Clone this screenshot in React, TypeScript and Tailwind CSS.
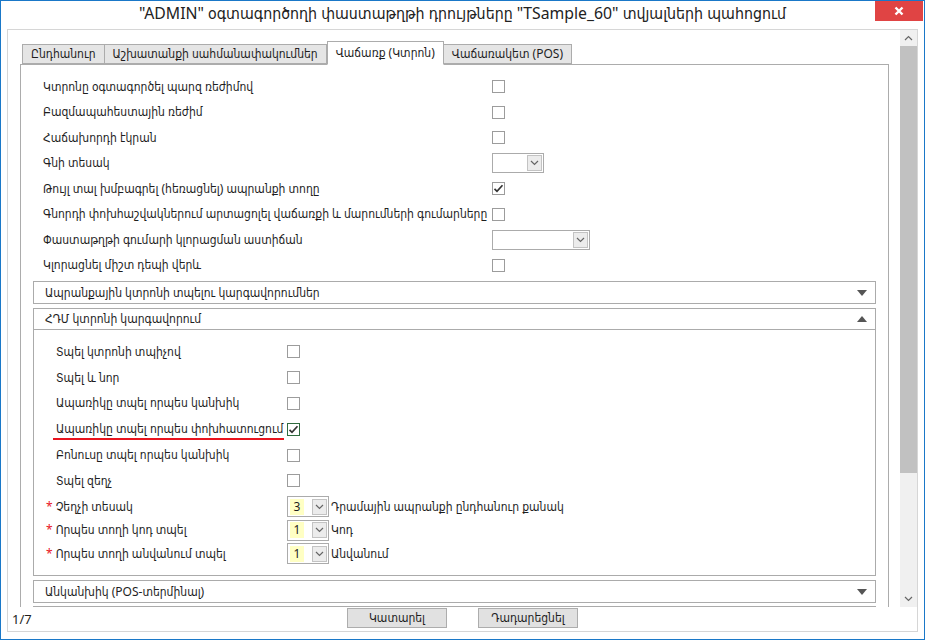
import React from "react";

const FONT = "font-['Noto_Sans','DejaVu_Sans_Condensed','DejaVu_Sans',sans-serif]";

const Check = ({ checked = false, focus = false }: { checked?: boolean; focus?: boolean }) => (
  <span
    className={
      focus
        ? "w-[13px] h-[13px] border border-[#2f6b3f] bg-white flex items-center justify-center"
        : "w-[13px] h-[13px] border border-[#9c9c9c] bg-white flex items-center justify-center"
    }
  >
    {checked && (
      <svg width="11" height="11" viewBox="0 0 11 11">
        <path d="M1.5 5.8 L4 8.3 L9.5 2.2" fill="none" stroke="#333" strokeWidth="1.7" />
      </svg>
    )}
  </span>
);

const Chevron = ({ up = false }: { up?: boolean }) => (
  <svg width="9" height="6" viewBox="0 0 9 6">
    <path d={up ? "M1 5 L4.5 1.5 L8 5" : "M1 1 L4.5 4.5 L8 1"} fill="none" stroke="#666" strokeWidth="1.2" />
  </svg>
);

const Tri = ({ up = false }: { up?: boolean }) => (
  <svg width="10" height="6" viewBox="0 0 10 6">
    <path d={up ? "M0 6 L5 0 L10 6 Z" : "M0 0 L10 0 L5 6 Z"} fill="#555" />
  </svg>
);

const DropBtn = () => (
  <span className="w-[15px] h-[16px] border border-[#c3c3c3] bg-[#ececec] flex items-center justify-center">
    <Chevron />
  </span>
);

const Select = ({ width }: { width: string }) => (
  <span className={`${width} h-[20px] border border-[#ababab] bg-white flex items-center justify-end pr-[1px]`}>
    <DropBtn />
  </span>
);

const mainRows: { label: string; ctl: React.ReactNode }[] = [
  { label: "Կտրոնը օգտագործել պարզ ռեժիմով", ctl: <Check /> },
  { label: "Բազմապահեստային ռեժիմ", ctl: <Check /> },
  { label: "Հաճախորդի էկրան", ctl: <Check /> },
  { label: "Գնի տեսակ", ctl: <Select width="w-[52px]" /> },
  { label: "Թույլ տալ խմբագրել (հեռացնել) ապրանքի տողը", ctl: <Check checked /> },
  { label: "Գնորդի փոխհաշվակներում արտացոլել վաճառքի և մարումների գումարները", ctl: <Check /> },
  { label: "Փաստաթղթի գումարի կլորացման աստիճան", ctl: <Select width="w-[98px]" /> },
  { label: "Կլորացնել միշտ դեպի վերև", ctl: <Check /> },
];

const hdmRows: { label: string; checked?: boolean; focus?: boolean; underline?: boolean }[] = [
  { label: "Տպել կտրոնի տպիչով" },
  { label: "Տպել և նոր" },
  { label: "Ապառիկը տպել որպես կանխիկ" },
  { label: "Ապառիկը տպել որպես փոխհատուցում", checked: true, focus: true, underline: true },
  { label: "Բոնուսը տպել որպես կանխիկ" },
  { label: "Տպել զեղչ" },
];

const reqRows = [
  { label: "Չեղչի տեսակ", value: "3", text: "Դրամային ապրանքի ընդհանուր քանակ" },
  { label: "Որպես տողի կոդ տպել", value: "1", text: "Կոդ" },
  { label: "Որպես տողի անվանում տպել", value: "1", text: "Անվանում" },
];

const tabs = ["Ընդհանուր", "Աշխատանքի սահմանափակումներ", "Վաճառք (Կտրոն)", "Վաճառակետ (POS)"];

const Header = ({ title, open = false }: { title: string; open?: boolean }) => (
  <div
    className={
      open
        ? "h-[21px] flex items-center justify-between pl-[11px] pr-[8px] border-b border-[#ababab]"
        : "h-[21px] flex items-center justify-between pl-[11px] pr-[8px]"
    }
  >
    <span>{title}</span>
    <Tri up={open} />
  </div>
);

export default function App() {
  return (
    <div className={`w-[925px] h-[640px] border border-[#1a78c8] bg-white flex flex-col overflow-hidden text-[12px] text-[#1e1e1e] whitespace-nowrap ${FONT}`}>
      {/* title bar */}
      <div className="h-[28px] relative flex items-center justify-center">
        <span className="text-[15.8px] text-[#222] -mt-[2px]">
          "ADMIN" օգտագործողի փաստաթղթի դրույթները "TSample_60" տվյալների պահոցում
        </span>
        <div className="absolute top-[-1px] right-[1px] w-[48px] h-[21px] bg-[#e04444] flex items-center justify-center">
          <svg width="10" height="10" viewBox="0 0 10 10">
            <path d="M1.5 1.5 L8.5 8.5 M8.5 1.5 L1.5 8.5" stroke="#fff" strokeWidth="2.4" />
          </svg>
        </div>
      </div>

      <div className="flex-1 px-[6px] pb-[7px] flex">
        <div className="flex-1 border border-[#d6d6d6] flex flex-col">
          <div className="h-[577px] flex">
            {/* scrollable content */}
            <div className="flex-1 overflow-hidden pt-[11px] pl-[12px] pr-[11px]">
              <div className="flex items-end pl-[2px] h-[23px]">
                {tabs.map((t, i) =>
                  i === 2 ? (
                    <div
                      key={t}
                      className="h-[24px] -mb-[1px] px-[8px] bg-white border border-[#acacac] border-b-white flex items-center relative z-10"
                    >
                      {t}
                    </div>
                  ) : (
                    <div
                      key={t}
                      className={
                        i === 0
                          ? "h-[20px] px-[8px] bg-[#e5e5e5] border border-[#acacac] flex items-center"
                          : "h-[20px] px-[8px] bg-[#e5e5e5] border border-l-0 border-[#acacac] flex items-center"
                      }
                    >
                      {t}
                    </div>
                  )
                )}
              </div>
              <div className="border border-[#acacac] bg-white h-[700px] pt-[9px] px-[12px]">
                <div className="pl-[10px]">
                  {mainRows.map((r) => (
                    <div key={r.label} className="h-[25.5px] flex items-center">
                      <span className="w-[449px]">{r.label}</span>
                      {r.ctl}
                    </div>
                  ))}
                </div>

                <div className="mt-[3px] border border-[#ababab]">
                  <Header title="Ապրանքային կտրոնի տպելու կարգավորումներ" />
                </div>

                <div className="mt-[4px] border border-[#ababab]">
                  <Header title="ՀԴՄ կտրոնի կարգավորում" open />
                  <div className="pt-[9px] pb-[10px]">
                    {hdmRows.map((r) => (
                      <div key={r.label} className="h-[25.8px] flex items-center pl-[22px]">
                        <span className="w-[231px] relative">
                          {r.label}
                          {r.underline && (
                            <span className="absolute left-[-3px] right-[3px] bottom-[-2px] h-[2px] bg-[#e8141e]" />
                          )}
                        </span>
                        <Check checked={r.checked} focus={r.focus} />
                      </div>
                    ))}
                    <div className="mt-[1px]">
                      {reqRows.map((r) => (
                        <div key={r.label} className="h-[23.5px] flex items-center pl-[12px]">
                          <span className="w-[241px]">
                            <span className="text-[#e8141e] mr-[3px]">*</span>
                            {r.label}
                          </span>
                          <span className="w-[42px] h-[21px] border border-[#ababab] bg-white flex items-center pl-[2px] pr-[1px] justify-between">
                            <span className="w-[14px] h-[16px] bg-[#ffffc4] flex items-center justify-center text-[12px]">{r.value}</span>
                            <DropBtn />
                          </span>
                          <span className="ml-[2px]">{r.text}</span>
                        </div>
                      ))}
                    </div>
                  </div>
                </div>

                <div className="mt-[4px] border border-[#ababab]">
                  <Header title="Անկանխիկ (POS-տերմինալ)" />
                </div>
                <div className="mt-[3px] border border-[#ababab] h-[22px]" />
              </div>
            </div>

            {/* scrollbar */}
            <div className="w-[17px] bg-[#f0f0f0] flex flex-col">
              <div className="h-[16px] flex items-center justify-center">
                <Chevron up />
              </div>
              <div className="h-[427px] bg-[#c1c1c1]" />
              <div className="flex-1" />
              <div className="h-[17px] flex items-center justify-center">
                <Chevron />
              </div>
            </div>
          </div>

          {/* footer */}
          <div className="flex-1 relative flex items-start">
            <span className="absolute left-[4px] bottom-[2px] text-[13px]">1/7</span>
            <div className="ml-[339px] mt-[1px] flex gap-[31px]">
              <button className="w-[100px] h-[20px] border border-[#adadad] bg-[#e1e1e1] flex items-center justify-center">
                Կատարել
              </button>
              <button className="w-[100px] h-[20px] border border-[#adadad] bg-[#e1e1e1] flex items-center justify-center">
                Դադարեցնել
              </button>
            </div>
          </div>
        </div>
      </div>
    </div>
  );
}
